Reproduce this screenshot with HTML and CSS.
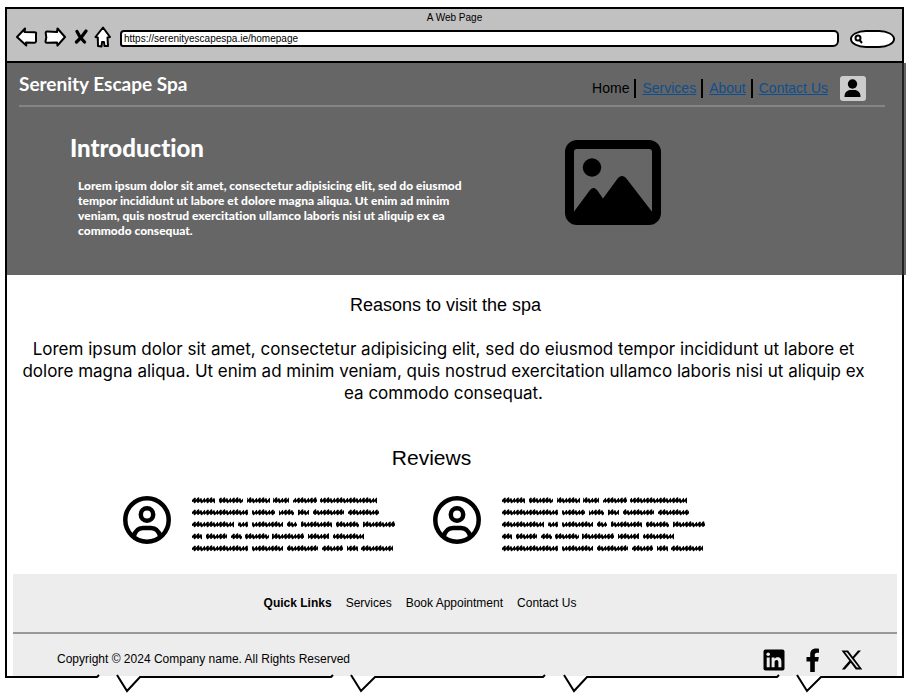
FILE: index.html
```
<!DOCTYPE html>
<html lang="en">
<head>
<meta charset="utf-8">
<title>Serenity Escape Spa</title>
<link rel="stylesheet" href="styles.css">
</head>
<body>
<div class="window">
  <div class="chrome">
    <div class="chrome-title">A Web Page</div>
    <div class="toolbar">
      <div class="tools">
        <button type="button" class="tool" aria-label="Back"><svg width="22" height="20" viewBox="0 0 22 20"><path d="M1 10 9 1.500 8.500 5l10.500.3q1.500 0 1 1.700v7.500q-.5 1.500-2 1.300l-8-.4.3 3z"/></svg></button>
        <button type="button" class="tool" aria-label="Forward"><svg width="22" height="20" viewBox="0 0 22 20"><path d="M21 10 13.500 1.500 13 5 3 4.500q-1.500 0-1.200 2l.5 4-.8 4q0 1.500 1.500 1.300l10-.3.500 3z"/></svg></button>
        <button type="button" class="tool tool-stop" aria-label="Stop"><svg width="14" height="16" viewBox="0 0 14 16"><path d="M3 2.500 6 8l4.500 5M12 2 7.500 8l-5 5" fill="none" stroke-width="3.200"/></svg></button>
        <button type="button" class="tool" aria-label="Home"><svg width="18" height="22" viewBox="0 0 18 22"><path d="M9 1.500 16 11l-2.500.5.500 8.500h-3.500l-.5-4H8l-.5 4.500-3.500-.5-.200-8.500L1.500 11z"/></svg></button>
      </div>
      <input class="address" type="text" aria-label="Address" value="https://serenityescapespa.ie/homepage">
      <div class="search">
        <svg width="9" height="10" viewBox="0 0 9 10"><circle cx="4" cy="4" r="2.500"/><path d="M5.500 6 8 9"/></svg>
        <input type="search" aria-label="Search">
      </div>
    </div>
  </div>

  <header class="hero">
    <div class="bar">
      <div class="brand">Serenity Escape Spa</div>
      <nav class="nav">
        <a href="#home" class="current">Home</a>
        <span class="item"><a href="#services">Services</a></span>
        <span class="item"><a href="#about">About</a></span>
        <span class="item"><a href="#contact">Contact Us</a></span>
      </nav>
      <button type="button" class="account" aria-label="Account"><svg width="26" height="25" viewBox="0 0 26 25"><circle cx="12.500" cy="8" r="4.700"/><path d="M4.500 21c0-5 3-7 6-7h4c3 0 6 2 6 7z"/></svg></button>
    </div>
    <div class="intro">
      <div class="intro-text">
        <h1>Introduction</h1>
        <p>Lorem ipsum dolor sit amet, consectetur adipisicing elit, sed do eiusmod<br>tempor incididunt ut labore et dolore magna aliqua. Ut enim ad minim<br>veniam, quis nostrud exercitation ullamco laboris nisi ut aliquip ex ea<br>commodo consequat.</p>
      </div>
      <svg class="picture" width="96" height="85" viewBox="0 0 96 85"><rect x="4.500" y="4.500" width="87" height="76" rx="7.500" fill="none" stroke="#000" stroke-width="9"/><circle cx="27" cy="27.500" r="9.200"/><path d="M8 73 25 50q3.500-4 7 0l6 8.500L53 38q4-4 8 0l27 35v5H8z"/></svg>
    </div>
  </header>

  <main>
    <section class="reasons">
      <h2>Reasons to visit the spa</h2>
      <p>Lorem ipsum dolor sit amet, consectetur adipisicing elit, sed do eiusmod tempor incididunt ut labore et<br>dolore magna aliqua. Ut enim ad minim veniam, quis nostrud exercitation ullamco laboris nisi ut aliquip ex<br>ea commodo consequat.</p>
    </section>
    <section class="reviews">
      <h2>Reviews</h2>
      <div class="review-list">
        <article class="review">
          <svg width="48" height="48" viewBox="0 0 48 48"><g id="avatar" fill="none" stroke="#000" stroke-width="4.500"><circle cx="24" cy="24" r="21.700"/><circle cx="24" cy="18.500" r="6.200"/><path d="M10.500 41c1.500-6 5-9 9.500-9h8c4.500 0 8 3 9.500 9"/></g></svg>
          <svg width="206" height="60" viewBox="0 0 206 60">
            <defs><pattern id="scribble" width="13" height="12" patternUnits="userSpaceOnUse"><path d="M-1 8 3 4.500 2.500 8.500 6.500 4.200 6 8.200 9 5 9.500 8.500 13 4.600 12.500 8 16 5M-1 7H14" fill="none" stroke="#000" stroke-width="1.700" stroke-linejoin="round"/></pattern></defs>
            <path id="words" fill="none" stroke="url(#scribble)" stroke-width="8" d="M0 6.500H23M27 6.500H51M55 6.500H78M81 6.500H97M101 6.500H125M128 6.500H185M0 18.500H56M60 18.500H83M87 18.500H102M106 18.500H117M121 18.500H152M156 18.500H187M0 30.500H42M46 30.500H56M60 30.500H91M95 30.500H105M109 30.500H140M144 30.500H167M171 30.500H203M0 42.500H10M14 42.500H35M39 42.500H50M53 42.500H77M80 42.500H112M116 42.500H137M141 42.500H172M0 54.500H56M60 54.500H91M95 54.500H126M130 54.500H151M155 54.500H166M169 54.500H201"/>
          </svg>
        </article>
        <article class="review">
          <svg width="48" height="48" viewBox="0 0 48 48"><use href="#avatar"/></svg>
          <svg width="206" height="60" viewBox="0 0 206 60"><use href="#words"/></svg>
        </article>
      </div>
    </section>
  </main>

  <footer>
    <div class="links">
      <strong>Quick Links</strong>
      <a href="#services">Services</a>
      <a href="#book">Book Appointment</a>
      <a href="#contact">Contact Us</a>
    </div>
    <div class="legal">
      <p>Copyright © 2024 Company name. All Rights Reserved</p>
      <div class="social">
        <a href="#linkedin" aria-label="LinkedIn"><svg width="22" height="22" viewBox="0 0 22 22"><rect x=".5" y=".5" width="21" height="21" rx="2"/><g fill="#ededed"><circle cx="5.200" cy="5.300" r="1.800"/><path d="M3.700 8.500h3v9.800h-3zM8.600 8.500h2.900v1.300c.6-1 1.700-1.600 3-1.600 3 0 3.900 1.900 3.900 4.700v5.400h-3v-4.800c0-1.500-.3-2.600-1.800-2.600s-2 1.100-2 2.600v4.800h-3z"/></g></svg></a>
        <a href="#facebook" aria-label="Facebook"><svg width="14" height="24" viewBox="0 0 14 24"><path d="M4.200 24V13.500H.5V9h3.700V6.500C4.200 2.500 6.500.5 9.800.5c1.500 0 3.200.2 3.200.2v4h-1.900c-1.700 0-2.300 1-2.300 2.100V9h4l-.7 4.500H8.800V24z"/></svg></a>
        <a href="#x" aria-label="X"><svg width="22" height="20" viewBox="0 0 22 20"><path d="M17 .5h3L13 8.300 21.300 19.500h-6.500l-5-6.700-5.900 6.700H.8l7.500-8.700L.5.500h6.600l4.600 6.200zM16 17.600h1.800L5.900 2.300H4z"/></svg></a>
      </div>
    </div>
  </footer>
</div>
<svg class="torn-edge" viewBox="0 0 906 20" preserveAspectRatio="none"><path d="M5 3H97L99 1M117 1 127 17 140 3H331L333 1M351 1 361 17 375 3H543L545 1M564 1 574 17 587 3H777L779 1M797 1 807 17 821 3H904" vector-effect="non-scaling-stroke"/></svg>
</body>
</html>
```
FILE: styles.css
```
* { box-sizing: border-box; }

body {
  margin: 0;
  padding-top: 7px;
  background: #fff;
  color: #000;
  font-family: "Liberation Sans", Arial, sans-serif;
  font-size: 12px;
  overflow-x: hidden;
}

h1, h2, p { margin: 0; }
svg { display: block; flex-shrink: 0; }
a { color: inherit; text-decoration: none; }
button { border: 0; padding: 0; background: none; }
p, h1, h2, a, strong { white-space: nowrap; }

.window {
  margin: 0 2px 0 5px;
  border: 2px solid #000;
  border-bottom: 0;
}

/* Browser chrome */
.chrome {
  background: #c1c1c1;
  border-bottom: 2px solid #000;
  height: 54px;
}
.chrome-title { text-align: center; font-size: 10px; line-height: 17px; }
.toolbar { display: flex; align-items: center; padding: 0 7px 0 9px; }
.tools { display: flex; align-items: center; gap: 6px; margin-right: 8px; }
.tool-stop { margin: 0 2px 1px; }
.tools .tool:last-child { margin-left: -2px; }
.address {
  flex: 1;
  min-width: 0;
  height: 17px;
  margin-top: 3px;
  padding: 0 2px;
  border: 2px solid #000;
  border-radius: 4px 5px 6px 3px;
  background: #fff;
  font: inherit;
  font-size: 10px;
  color: #000;
}
.tool svg { fill: #fff; stroke: #000; stroke-width: 2; stroke-linejoin: round; stroke-linecap: round; }
.search {
  display: flex;
  align-items: center;
  width: 45px;
  height: 18px;
  margin: 3px 0 0 11px;
  padding-left: 2px;
  border: 2px solid #000;
  border-radius: 16px / 9px;
  background: #fff;
}
.search svg { fill: none; stroke: #000; stroke-width: 2; }
.search input { width: 24px; height: 10px; border: 0; padding: 0; background: none; }

/* Hero */
.hero {
  margin-right: -4px;
  height: 212px;
  background: linear-gradient(to left, #666 2px, #222 2px, #222 4px, #666 4px);
}
.brand, .intro-text { font-family: Lato, sans-serif; font-variant-ligatures: none; }
.bar {
  display: flex;
  align-items: center;
  height: 44px;
  margin: 0 21px 0 12px;
  padding: 8px 19px 0 0;
  border-bottom: 2px solid #858585;
}
.brand { flex: 1; color: #fff; font-size: 19px; font-weight: 700; line-height: 24px; padding-bottom: 8px; }
.nav { display: flex; font-size: 14px; line-height: 19px; color: #0f4e8c; }
.nav a { text-decoration: underline; }
.nav .item { border-left: 2px solid #000; padding-left: 6px; margin-left: 5px; }
.nav .current { color: #000; text-decoration: none; }
.account { margin-left: 12px; border-radius: 3px; background: #ccc; }

.intro { display: flex; padding: 26px 0 0 63px; }
.intro-text { width: 495px; color: #fff; }
.intro h1 { font-size: 24px; line-height: 30px; font-weight: 900; }
.intro p { padding: 15px 0 0 8px; font-size: 12px; line-height: 15px; font-weight: 900; }
.picture { margin-top: 7px; }

/* Content */
.reasons { padding: 18px 34px 0 12px; text-align: center; }
.reasons h2 { font-size: 18px; line-height: 24px; font-weight: 400; padding-left: 4px; }
.reasons p { padding-top: 21px; font-family: Inter, sans-serif; font-size: 17px; line-height: 22px; }
.reviews { padding-top: 40px; }
.reviews h2 { padding-right: 46px; text-align: center; font-size: 21px; line-height: 28px; font-weight: 400; }
.review-list { display: flex; justify-content: center; gap: 35px; padding: 24px 79px 0 0; }
.review { display: flex; gap: 21px; }
.review svg + svg { margin-top: -2px; }

/* Footer */
footer { margin: 20px 5px 0 6px; background: #ededed; }
.links {
  display: flex;
  justify-content: center;
  gap: 14px;
  height: 60px;
  padding: 20px 70px 0 0;
  border-bottom: 2px solid #999;
  line-height: 18px;
}
.legal { display: flex; justify-content: space-between; align-items: center; height: 42px; padding: 10px 34px 0 44px; }
.legal p { padding-bottom: 2px; }
.social { display: flex; align-items: center; gap: 21px; }

.torn-edge { width: 100%; height: 20px; margin-top: -2px; fill: none; stroke: #000; stroke-width: 2; }
```
